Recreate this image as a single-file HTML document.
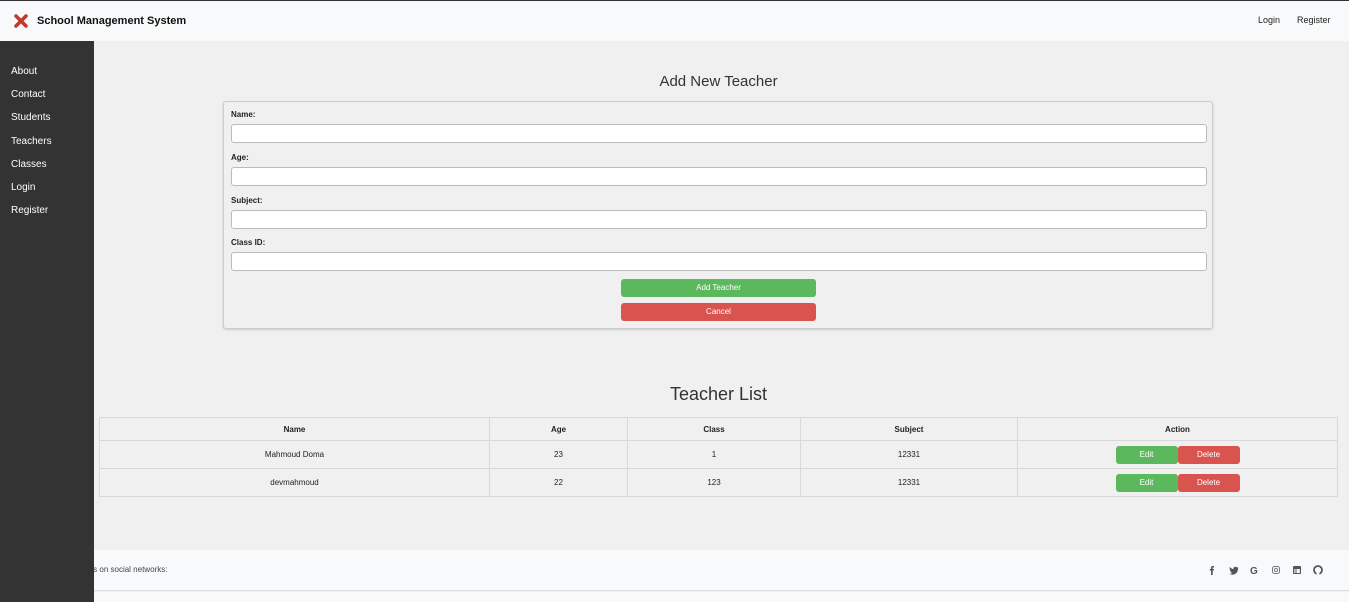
<!DOCTYPE html>
<html><head><style>
*{box-sizing:border-box;margin:0;padding:0}
body{width:1349px;height:602px;overflow:hidden;background:#f0f0f0;font-family:"Liberation Sans",Arial,sans-serif;position:relative}
.top{position:absolute;left:0;top:0;width:1349px;height:41px;background:#f8f9fa;border-top:1px solid #333}
.brand{position:absolute;left:13px;top:12px;font-size:11px;font-weight:bold;color:#111;display:flex;align-items:center}
.brand span{margin-left:8px}
.tl{position:absolute;top:14px;font-size:9px;color:#222}
.side{position:absolute;left:0;top:41px;width:94px;height:561px;background:#333;z-index:2}
.side div{color:#fff;font-size:10px;position:absolute;left:11px}
h2{position:absolute;font-weight:normal;color:#333;text-align:center}
.form{position:absolute;left:223px;top:101px;width:990px;height:228px;border:1px solid #ccc;border-radius:3px;background:#f0f0f0;box-shadow:0 1px 2px rgba(0,0,0,.15)}
.lbl{position:absolute;left:7px;font-size:8px;font-weight:bold;color:#222}
.inp{position:absolute;left:7px;width:976px;height:19px;background:#fff;border:1px solid #bbb;border-radius:3px}
.btn{position:absolute;left:397px;width:195px;height:18px;border-radius:3px;color:#fff;font-size:8px;text-align:center;line-height:18px}
table{position:absolute;left:99px;top:417px;width:1239px;border-collapse:collapse;font-size:8px;color:#222}
td,th{border:1px solid #d8d8d8;text-align:center}
th{height:23px}
td{height:28px}
.b{display:inline-block;width:62px;height:18px;line-height:18px;color:#fff;border-radius:3px;font-size:8px;vertical-align:middle}
.foot{position:absolute;left:0;top:550px;width:1349px;height:41px;background:#f8f9fa;border-bottom:1px solid #ddd}
.bot{position:absolute;left:0;top:592px;width:1349px;height:10px;background:#f8f9fa}
.ic{position:absolute;top:565px}
</style></head><body>
<div class="top">
<div class="brand"><svg width="16" height="16" viewBox="0 0 16 16"><path d="M3 3L13 13M13 3L3 13" stroke="#c0392b" stroke-width="3.5" stroke-linecap="round"/></svg><span>School Management System</span></div>
<div class="tl" style="left:1258px">Login</div><div class="tl" style="left:1297px">Register</div>
</div>
<div class="side">
<div style="top:25px">About</div><div style="top:48px">Contact</div><div style="top:71px">Students</div><div style="top:95px">Teachers</div><div style="top:118px">Classes</div><div style="top:141px">Login</div><div style="top:164px">Register</div>
</div>
<h2 style="left:94px;width:1249px;top:73px;font-size:15px">Add New Teacher</h2>
<div class="form">
<div class="lbl" style="top:8px">Name:</div><div class="inp" style="top:22px"></div>
<div class="lbl" style="top:51px">Age:</div><div class="inp" style="top:65px"></div>
<div class="lbl" style="top:94px">Subject:</div><div class="inp" style="top:108px"></div>
<div class="lbl" style="top:136px">Class ID:</div><div class="inp" style="top:150px"></div>
<div class="btn" style="top:177px;background:#5cb85c">Add Teacher</div>
<div class="btn" style="top:201px;background:#d9534f">Cancel</div>
</div>
<h2 style="left:94px;width:1249px;top:384px;font-size:18px">Teacher List</h2>
<table>
<tr><th style="width:390px">Name</th><th style="width:138px">Age</th><th style="width:173px">Class</th><th style="width:217px">Subject</th><th>Action</th></tr>
<tr><td>Mahmoud Doma</td><td>23</td><td>1</td><td>12331</td><td><span class="b" style="background:#5cb85c">Edit</span><span class="b" style="background:#d9534f">Delete</span></td></tr>
<tr><td>devmahmoud</td><td>22</td><td>123</td><td>12331</td><td><span class="b" style="background:#5cb85c">Edit</span><span class="b" style="background:#d9534f">Delete</span></td></tr>
</table>
<div class="foot"><div style="position:absolute;left:18px;top:15px;font-size:8px;color:#444">Get connected with us on social networks:</div></div>
<div class="bot"></div>
<svg class="ic" style="left:1206px" width="120" height="10" viewBox="0 0 120 10" fill="#555">
<path d="M5 10V5.5H3.8V4H5V3C5 1.7 5.6 1 7 1H8V2.5H7.3C6.8 2.5 6.7 2.7 6.7 3.1V4H8L7.8 5.5H6.7V10Z"/>
<path d="M32 2.5C31.6 2.7 31.3 2.8 30.9 2.8 31.3 2.6 31.6 2.2 31.7 1.8 31.3 2 30.9 2.2 30.5 2.3 29.7 1.4 28 1.6 27.6 2.9 27.5 3.3 27.5 3.6 27.6 4 26 3.9 24.7 3.2 23.8 2 23.3 3 23.6 4.2 24.5 4.7 24.2 4.7 23.9 4.6 23.7 4.5 23.7 5.5 24.4 6.3 25.3 6.5 25 6.6 24.7 6.6 24.4 6.5 24.7 7.3 25.5 7.9 26.3 7.9 25.4 8.6 24.3 8.9 23.2 8.8 27.2 11.2 32.2 8.6 32 3.3 32.4 3.1 32.7 2.8 32 2.5Z"/>
<text x="44" y="9" font-size="10" font-weight="bold" font-family="Liberation Sans">G</text>
<rect x="66.5" y="1.5" width="7" height="7" rx="2" fill="none" stroke="#777"/><circle cx="70" cy="5" r="1.6" fill="none" stroke="#777"/>
<rect x="87" y="1" width="8" height="8" rx="1"/><rect x="88.3" y="4" width="1.2" height="4" fill="#f8f9fa"/><rect x="90.5" y="4" width="3.3" height="4" fill="#f8f9fa"/>
<circle cx="112" cy="5" r="4" fill="none" stroke="#555" stroke-width="1.8"/><rect x="110.6" y="7" width="2.8" height="3" fill="#f8f9fa"/>
</svg>
</body></html>
